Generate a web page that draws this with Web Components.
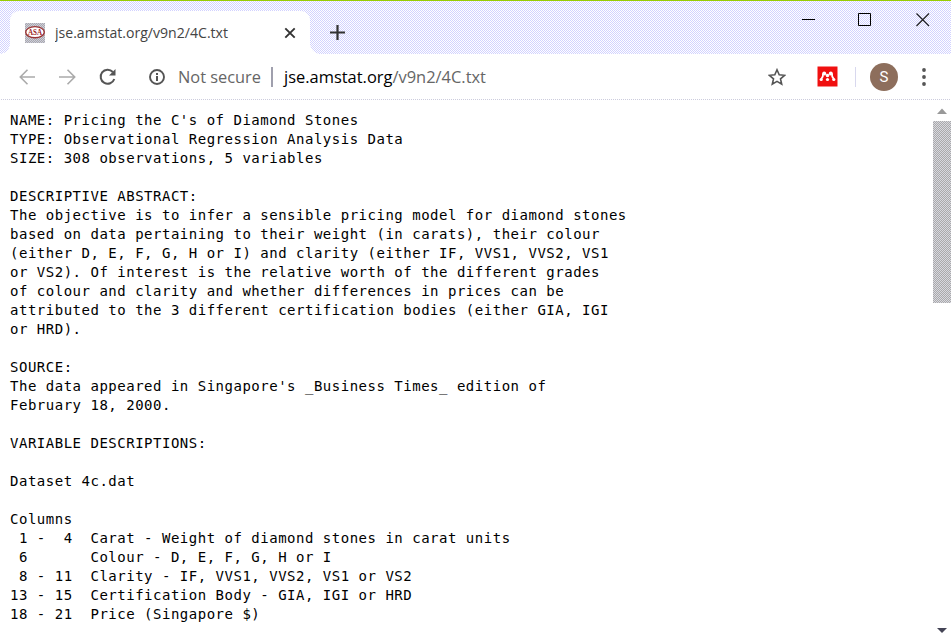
<!DOCTYPE html>
<html lang="en"><head><meta charset="utf-8"><title>jse.amstat.org/v9n2/4C.txt</title>
<style>html,body{margin:0;height:100%;overflow:hidden;background:#fff}</style></head><body>
<browser-window></browser-window>
<script>
const define=(name,html)=>customElements.define(name,class extends HTMLElement{
  constructor(){super();this.attachShadow({mode:'open'}).innerHTML=html;}
});

define('asa-icon',`<style>:host{display:block;width:20px;height:20px;background:repeating-conic-gradient(#aaa 0 25%,#ccd 0 50%) 0 0/2px 2px}svg{display:block}</style>
<svg width="20" height="20" viewBox="0 0 20 20"><ellipse cx="10" cy="9.2" rx="9.3" ry="5.6" fill="#fff" stroke="#933" stroke-width="1.4"/><text x="10" y="12" text-anchor="middle" textLength="14" lengthAdjust="spacingAndGlyphs" font-family="Liberation Serif,serif" font-weight="700" font-size="8" fill="#922">ASA</text></svg>`);

define('browser-tab',`<style>:host{display:flex;align-items:center;box-sizing:border-box;width:300px;height:43px;padding:0 13px 0 15px;background:#fff;border-radius:9px 9px 0 0;position:relative;font:15px "Open Sans",sans-serif;color:#444}
:host::before,:host::after{content:"";position:absolute;bottom:0;width:10px;height:10px}
:host::before{left:-10px;background:radial-gradient(circle at 0 0,transparent 9.5px,#fff 10px)}
:host::after{right:-10px;background:radial-gradient(circle at 100% 0,transparent 9.5px,#fff 10px)}
.title{margin-left:10px;flex:1;white-space:nowrap}svg{display:block}</style>
<slot name="icon"></slot><svg class="title" height="26"><text x="0" y="18" textLength="173" lengthAdjust="spacingAndGlyphs" fill="#444"></text></svg>
<svg width="14" height="14" viewBox="0 0 14 14"><path d="M2.3 2.3l9.4 9.4m0-9.4l-9.4 9.4" stroke="#333" stroke-width="1.9"/></svg>`);

define('window-controls',`<style>:host{display:flex;gap:42px;margin-left:auto;padding:12px 21px 0 0}svg{display:block}svg+svg+svg{margin-left:2px}</style>
<svg width="14" height="14"><path d="M0 6.5h13" stroke="#000"/></svg>
<svg width="14" height="14"><path d="M.5.5h12v12h-12z" fill="none" stroke="#000"/></svg>
<svg width="14" height="14"><path d="M.5.5l12.5 12.5m0-12.5L.5 13" stroke="#222" stroke-width="1.2"/></svg>`);

define('tab-strip',`<style>:host{display:flex;box-sizing:border-box;height:54px;border-top:1px solid #9c0;padding-left:10px;background:repeating-conic-gradient(#d2d2ff 0 25%,#fff 0 50%) 0 0/2px 2px #e6e6ff}
browser-tab{margin-top:10px}.plus{margin:24px 0 0 20px}</style>
<browser-tab id="tab"><asa-icon slot="icon"></asa-icon></browser-tab>
<svg class="plus" width="16" height="16"><path d="M0 7.5h15M7.5 0v15" stroke="#333" stroke-width="2.2"/></svg>
<window-controls></window-controls>`);

define('address-text',`<style>:host{display:block;width:310px;height:30px;margin-left:11px}svg{display:block;font:17px "Open Sans",sans-serif}</style>
<svg width="312" height="30"><text x="1" y="21" textLength="83" lengthAdjust="spacingAndGlyphs" fill="#666">Not secure</text><path d="M95 5v20" stroke="#889" stroke-width="1.6"/><text x="107" y="21" textLength="202" lengthAdjust="spacingAndGlyphs" fill="#666"><tspan fill="#000">jse.amstat.org</tspan>/v9n2/4C.txt</text></svg>`);

define('user-avatar',`<style>:host{display:grid;place-items:center;width:28px;height:28px;border-radius:50%;background:#8d6e5c;color:#fff;font:15px Roboto,sans-serif}</style><slot></slot>`);

define('tool-bar',`<style>:host{display:flex;align-items:center;box-sizing:border-box;height:46px;padding:0 25px 0 19px;background:repeating-linear-gradient(90deg,#fff 0 1px,#ccd 1px 2px) left bottom/100% 1px no-repeat #fff}
svg{display:block;flex:none}</style>
<svg width="17" height="16" fill="none" stroke="#aaa" stroke-width="1.6"><path d="M16 8H2M8.5.8L1.3 8l7.2 7.2"/></svg>
<svg width="17" height="16" style="margin-left:23px" fill="none" stroke="#aaa" stroke-width="1.6"><path d="M0 8h15M8.5.8L15.700 8l-7.200 7.200"/></svg>
<svg width="18" height="18" style="margin-left:23px"><path d="M15.300 11a7 7 0 1 1-1.500-7" fill="none" stroke="#555" stroke-width="2"/><path d="M16.500 1v6.500H10z" fill="#555"/></svg>
<svg width="18" height="18" style="margin-left:31px"><circle cx="9" cy="9" r="7" fill="none" stroke="#555" stroke-width="1.900"/><path d="M9 8v5M9 5v2" stroke="#555" stroke-width="2"/></svg>
<address-text></address-text>
<span style="flex:1"></span>
<svg width="18" height="18" viewBox="0 0 18 18" style="margin-right:31px"><path d="M9 1.800l2.200 5 5.400.500-4.100 3.600 1.200 5.300L9 13.400l-4.700 2.800 1.200-5.300-4.100-3.600 5.400-.500z" fill="none" stroke="#555" stroke-width="1.600"/></svg>
<svg width="21" height="21" viewBox="0 0 21 21" style="margin-top:-1px"><path d="M.5.5h20v20H.5z" fill="#f01010"/><g fill="#fff"><circle cx="7.200" cy="7.600" r="2"/><circle cx="13.800" cy="7.600" r="2"/><circle cx="10.500" cy="9.500" r="1.800"/><circle cx="4.200" cy="13.500" r="1.600"/><circle cx="10.500" cy="13.500" r="1.600"/><circle cx="16.800" cy="13.500" r="1.600"/></g><path d="M6 7.500q.5 3-1.800 5.500M15 7.500q-.5 3 1.800 5.500" fill="none" stroke="#fff" stroke-width="1.800"/></svg>
<svg width="1" height="20" style="margin:0 14px 0 17px"><path d="M0 0h1v20H0z" fill="#d8d8ee"/></svg>
<user-avatar>S</user-avatar>
<svg width="4" height="18" style="margin-left:24px" fill="#555"><circle cx="2" cy="2" r="1.900"/><circle cx="2" cy="9" r="1.900"/><circle cx="2" cy="16" r="1.900"/></svg>`);

define('text-document',`<style>:host{display:block;flex:1;overflow:hidden}::slotted(pre){margin:0;padding:11px 0 0 10px;font:14px/19px "DejaVu Sans Mono",monospace;letter-spacing:.51px;color:#000}</style><slot></slot>`);

define('scroll-bar',`<style>:host{display:flex;flex-direction:column;align-items:center;width:18px;height:100%}
.thumb{width:18px;height:182px;background:repeating-conic-gradient(#aaa 0 25%,#d8d8e0 0 50%) 0 0/2px 2px}
svg{display:block;flex:none}.down{margin-top:auto}</style>
<svg width="18" height="21"><path d="M4 14h10L9 8.500z" fill="#999"/></svg><div class="thumb"></div>
<svg class="down" width="18" height="18"><path d="M4 5h10L9 10z" fill="#445"/></svg>`);

define('browser-window',`<style>:host{display:flex;flex-direction:column;width:951px;height:641px;background:#fff}main{display:flex;height:541px}</style>
<tab-strip></tab-strip><tool-bar></tool-bar><main><text-document><pre>NAME: Pricing the C's of Diamond Stones
TYPE: Observational Regression Analysis Data
SIZE: 308 observations, 5 variables

DESCRIPTIVE ABSTRACT:
The objective is to infer a sensible pricing model for diamond stones
based on data pertaining to their weight (in carats), their colour
(either D, E, F, G, H or I) and clarity (either IF, VVS1, VVS2, VS1
or VS2). Of interest is the relative worth of the different grades
of colour and clarity and whether differences in prices can be
attributed to the 3 different certification bodies (either GIA, IGI
or HRD).

SOURCE:
The data appeared in Singapore's _Business Times_ edition of
February 18, 2000.

VARIABLE DESCRIPTIONS:

Dataset 4c.dat

Columns
 1 -  4  Carat - Weight of diamond stones in carat units
 6       Colour - D, E, F, G, H or I
 8 - 11  Clarity - IF, VVS1, VVS2, VS1 or VS2
13 - 15  Certification Body - GIA, IGI or HRD
18 - 21  Price (Singapore $)</pre></text-document><scroll-bar></scroll-bar></main>`);

document.querySelector('browser-window').shadowRoot.querySelector('tab-strip').shadowRoot.getElementById('tab').shadowRoot.querySelector('text').textContent='jse.amstat.org/v9n2/4C.txt';
</script></body></html>
